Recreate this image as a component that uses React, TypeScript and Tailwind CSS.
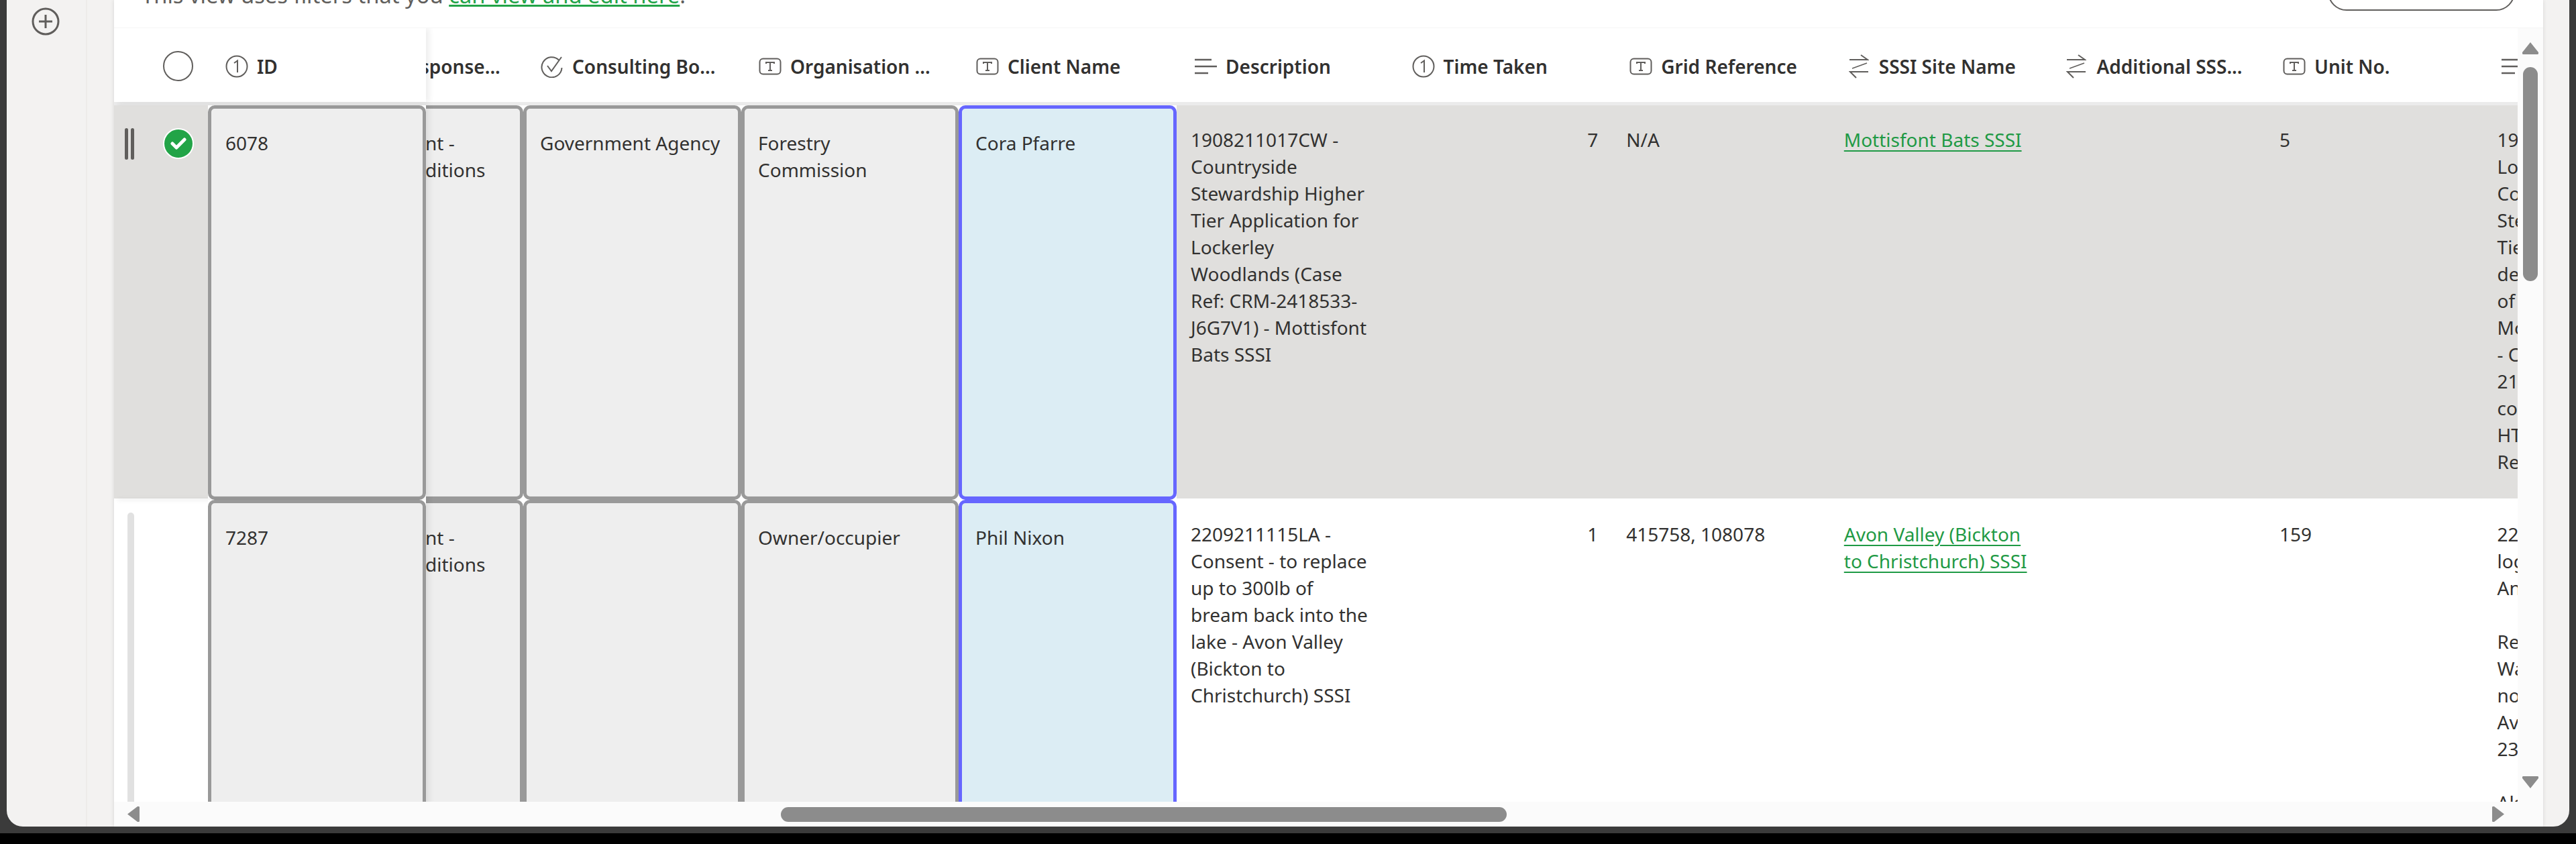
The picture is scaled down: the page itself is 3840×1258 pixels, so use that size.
const font = "font-['Noto_Sans','Open_Sans',sans-serif]";

type IconKind = 'number' | 'text' | 'check' | 'lines' | 'link';

function ColumnIcon({ kind }: { kind: IconKind }) {
  if (kind === 'number') {
    return (
      <svg width="34" height="34" viewBox="0 0 34 34" fill="none" stroke="#605e5c" strokeWidth="2">
        <circle cx="17" cy="17" r="15.5" />
        <path d="M13 12l5-3.5V26" />
      </svg>
    );
  }
  if (kind === 'text') {
    return (
      <svg width="34" height="26" viewBox="0 0 34 26" fill="none" stroke="#605e5c" strokeWidth="2">
        <rect x="1.5" y="1.5" width="31" height="23" rx="5" />
        <path d="M11 9V7h12v2M17 7v12M14 19h6" />
      </svg>
    );
  }
  if (kind === 'check') {
    return (
      <svg width="34" height="34" viewBox="0 0 34 34" fill="none" stroke="#605e5c" strokeWidth="2">
        <path d="M27 7.5A15 15 0 1 0 31.5 19" />
        <path d="M10 16l6 8L31 3" />
      </svg>
    );
  }
  if (kind === 'lines') {
    return (
      <svg width="34" height="24" viewBox="0 0 34 24" fill="none" stroke="#605e5c" strokeWidth="2.5">
        <path d="M1 2h25M1 12h33M1 22h20" />
      </svg>
    );
  }
  return (
    <svg width="30" height="36" viewBox="0 0 30 36" fill="none" stroke="#605e5c" strokeWidth="2">
      <path d="M1 8h27L18 1M29 26H2l9 9" />
      <path d="M27 13L5 21" strokeWidth="1.5" />
    </svg>
  );
}

function HeaderCell({ kind, label, className }: { kind: IconKind; label: string; className: string }) {
  return (
    <div className={`flex items-center gap-[13px] pl-[26px] text-[28px] font-semibold text-[#323130] ${className}`}>
      <span className="flex w-[34px] shrink-0 items-center justify-center">
        <ColumnIcon kind={kind} />
      </span>
      <span className="whitespace-nowrap">{label}</span>
    </div>
  );
}

function FrameCell({ children, active, className }: { children?: React.ReactNode; active?: boolean; className: string }) {
  return (
    <div className={`h-full shrink-0 bg-white ${className}`}>
      <div
        className={`h-full rounded-[10px] border-[5px] pl-[21px] pt-[31px] ${
          active ? 'border-[#6666ff] bg-[#dcedf4]' : 'border-[#999999] bg-[#eeeeee]'
        }`}
      >
        {children}
      </div>
    </div>
  );
}

function ClippedCell({ lines }: { lines: string[] }) {
  return (
    <div className="h-full w-[145px] shrink-0 overflow-hidden bg-white">
      <div className="h-full rounded-r-[10px] border-y-[5px] border-r-[5px] border-[#999999] bg-[#eeeeee] pt-[31px]">
        {lines.map((l) => (
          <div key={l} className="flex h-[40px] justify-start whitespace-pre ml-[-1px]">
            {l}
          </div>
        ))}
      </div>
    </div>
  );
}

function Lines({ lines, className = '' }: { lines: string[]; className?: string }) {
  return (
    <div className={`h-full w-[324.6px] shrink-0 overflow-hidden pt-[31px] ${className}`}>
      {lines.map((l, i) => (
        <div key={i} className="h-[40px] whitespace-nowrap">
          {l}
        </div>
      ))}
    </div>
  );
}

function LinkCell({ lines }: { lines: string[] }) {
  return (
    <div className="h-full w-[324.6px] shrink-0 pl-[21px] pt-[31px] text-[#1f9a45]">
      {lines.map((l) => (
        <div key={l} className="h-[40px] whitespace-nowrap underline decoration-2 underline-offset-[5px]">
          {l}
        </div>
      ))}
    </div>
  );
}

const rows = [
  {
    id: '6078',
    selected: true,
    consulting: 'Government Agency',
    organisation: ['Forestry', 'Commission'],
    client: 'Cora Pfarre',
    description: [
      '1908211017CW -',
      'Countryside',
      'Stewardship Higher',
      'Tier Application for',
      'Lockerley',
      'Woodlands (Case',
      'Ref: CRM-2418533-',
      'J6G7V1) - Mottisfont',
      'Bats SSSI',
    ],
    time: '7',
    grid: 'N/A',
    site: ['Mottisfont Bats SSSI'],
    unit: '5',
    notes: ['1908211017CW', 'Lockerley', 'Countryside', 'Stewardship', 'Tier', 'details', 'of', 'Mottisfont', '- CRM', '21', 'consultation', 'HTML', 'Response'],
  },
  {
    id: '7287',
    selected: false,
    consulting: '',
    organisation: ['Owner/occupier'],
    client: 'Phil Nixon',
    description: [
      '2209211115LA -',
      'Consent - to replace',
      'up to 300lb of',
      'bream back into the',
      'lake - Avon Valley',
      '(Bickton to',
      'Christchurch) SSSI',
    ],
    time: '1',
    grid: '415758, 108078',
    site: ['Avon Valley (Bickton', 'to Christchurch) SSSI'],
    unit: '159',
    notes: ['2209211115LA', 'logged', 'Angler', '', 'Request', 'Water', 'not', 'Avon', '23', '', 'Also'],
  },
];

function Row({ row, height }: { row: (typeof rows)[number]; height: string }) {
  return (
    <div className={`flex shrink-0 text-[#323130] ${height} ${row.selected ? 'bg-[linear-gradient(#e0dfdd_calc(100%-2px),#ffffff_2px)]' : 'bg-white'}`}>
      <div className="relative z-10 flex shrink-0 shadow-[5px_0_8px_rgba(0,0,0,0.07)]">
        <div className="flex h-full w-[140px] shrink-0 pt-[34px]">
          {row.selected ? (
            <div className="ml-[16px] flex h-[47px] gap-[4px]">
              <div className="h-full w-[5px] rounded-full bg-[#605e5c]" />
              <div className="h-full w-[5px] rounded-full bg-[#605e5c]" />
            </div>
          ) : (
            <div className="ml-[20px] mt-[-15px] h-[600px] w-[10px] rounded-full bg-[#e1e1e1]" />
          )}
          {row.selected && (
            <div className="ml-[43px] flex h-[46px] w-[46px] items-center justify-center rounded-full border-2 border-white bg-[#22a447]">
              <svg width="24" height="20" viewBox="0 0 24 20" fill="none" stroke="#fff" strokeWidth="5" strokeLinecap="round" strokeLinejoin="round">
                <path d="M3 10l6 6L21 4" />
              </svg>
            </div>
          )}
        </div>
        <FrameCell className="w-[325px]">{row.id}</FrameCell>
      </div>
      <ClippedCell lines={['nt -', 'ditions']} />
      <FrameCell className="w-[325px]">
        <div className="ml-[-1px]">{row.consulting}</div>
      </FrameCell>
      <FrameCell className="w-[324px]">
        {row.organisation.map((l) => (
          <div key={l} className="ml-[-1px]">
            {l}
          </div>
        ))}
      </FrameCell>
      <FrameCell active className="w-[325px]">
        <div className="ml-[-1px]">{row.client}</div>
      </FrameCell>
      <Lines lines={row.description} className="pl-[21px]" />
      <div className="h-full w-[324.6px] shrink-0 pt-[31px] pr-[21px] text-right">{row.time}</div>
      <Lines lines={[row.grid]} className="pl-[21px]" />
      <LinkCell lines={row.site} />
      <div className="h-full w-[324.6px] shrink-0" />
      <Lines lines={[row.unit]} className="pl-[21px]" />
      <Lines lines={row.notes} className="pl-[21px]" />
    </div>
  );
}

export default function App() {
  return (
    <div className={`h-[1258px] w-[3840px] overflow-hidden bg-black text-[28px] leading-[40px] ${font}`}>
      <div className="h-[1242px] bg-[#3b3b3b] pb-[10px] pl-[10px] pr-[10px]">
        <div className="flex h-full overflow-hidden rounded-b-[24px] bg-[#f3f2f1]">
          {/* left rail */}
          <div className="h-full w-[120px] shrink-0 border-r-2 border-[#edebe9] pl-[37px] pt-[11px]">
            <svg width="42" height="42" viewBox="0 0 42 42" fill="none" stroke="#605e5c">
              <circle cx="21" cy="21" r="19" strokeWidth="3" />
              <path d="M21 11v20M11 21h20" strokeWidth="3" />
            </svg>
          </div>
          <div className="w-[40px] shrink-0" />

          {/* main panel */}
          <div className="flex h-full w-[3621px] shrink-0 flex-col bg-white shadow-[0_0_6px_rgba(0,0,0,0.12)]">
            <div className="flex h-[42px] shrink-0 justify-between overflow-hidden border-b border-[#f5f5f5] pl-[41px] pr-[42px]">
              <div className="mt-[-27px] whitespace-nowrap text-[32.7px] text-[#605e5c]">
                This view uses filters that you{' '}
                <span className="text-[#22a447] underline decoration-[3px] underline-offset-[2px]">can view and edit here</span>.
              </div>
              <div className="mt-[-40px] flex h-[56px] w-[279px] shrink-0 items-end justify-center rounded-full border-2 border-[#605e5c] pb-[6px] text-[32px] font-semibold text-[#323130]">
                Clear filters
              </div>
            </div>

            <div className="flex min-h-0 flex-1">
              <div className="flex min-w-0 flex-1 flex-col overflow-hidden">
                {/* header */}
                <div className="flex h-[115px] shrink-0 border-b-[5px] border-[#ebebeb] bg-white pt-[3px]">
                  <div className="relative z-10 mt-[-3px] flex h-[110px] w-[465px] shrink-0 bg-white pt-[3px] shadow-[5px_0_8px_rgba(0,0,0,0.07)]">
                    <div className="flex h-full w-[140px] shrink-0 items-center pl-[73px]">
                      <div className="h-[45px] w-[45px] rounded-full border-2 border-[#605e5c]" />
                    </div>
                    <HeaderCell kind="number" label="ID" className="w-[325px]" />
                  </div>
                  <div className="flex h-full w-[145px] shrink-0 items-center overflow-hidden text-[28px] font-semibold text-[#323130]">
                    <span className="ml-[-9px] whitespace-nowrap">sponse...</span>
                  </div>
                  <HeaderCell kind="check" label="Consulting Bo..." className="w-[325px] shrink-0" />
                  <HeaderCell kind="text" label="Organisation ..." className="w-[324px] shrink-0" />
                  <HeaderCell kind="text" label="Client Name" className="w-[325px] shrink-0" />
                  <HeaderCell kind="lines" label="Description" className="w-[324.6px] shrink-0" />
                  <HeaderCell kind="number" label="Time Taken" className="w-[324.6px] shrink-0" />
                  <HeaderCell kind="text" label="Grid Reference" className="w-[324.6px] shrink-0" />
                  <HeaderCell kind="link" label="SSSI Site Name" className="w-[324.6px] shrink-0" />
                  <HeaderCell kind="link" label="Additional SSS..." className="w-[324.6px] shrink-0" />
                  <HeaderCell kind="text" label="Unit No." className="w-[324.6px] shrink-0" />
                  <HeaderCell kind="lines" label="Notes" className="w-[324.6px] shrink-0" />
                </div>
                <Row row={rows[0]} height="h-[588px]" />
                <Row row={rows[1]} height="h-[588px]" />
              </div>

              {/* vertical scrollbar */}
              <div className="flex h-full w-[38px] shrink-0 flex-col items-center bg-[#fbfbfb] pb-[20px] pt-[21px]">
                <svg width="24" height="18" viewBox="0 0 24 18" fill="#8c8c8c">
                  <path d="M12 0L24 15a2 2 0 0 1-2 3H2a2 2 0 0 1-2-3z" />
                </svg>
                <div className="mt-[19px] h-[319px] w-[22px] rounded-full bg-[#8c8c8c]" />
                <svg className="mt-auto" width="24" height="18" viewBox="0 0 24 18" fill="#8c8c8c">
                  <path d="M12 18L0 3a2 2 0 0 1 2-3h20a2 2 0 0 1 2 3z" />
                </svg>
              </div>
            </div>

            {/* horizontal scrollbar */}
            <div className="flex h-[37px] shrink-0 items-center bg-[#fbfbfb] pl-[20px] pr-[58px]">
              <svg width="18" height="23" viewBox="0 0 18 23" fill="#8c8c8c">
                <path d="M0 11.5L15 0a2 2 0 0 1 3 2v19a2 2 0 0 1-3 2z" />
              </svg>
              <div className="ml-[956px] h-[22px] w-[1082px] rounded-full bg-[#8c8c8c]" />
              <svg className="ml-auto" width="18" height="23" viewBox="0 0 18 23" fill="#8c8c8c">
                <path d="M18 11.5L3 23a2 2 0 0 1-3-2V2a2 2 0 0 1 3-2z" />
              </svg>
            </div>
          </div>
        </div>
      </div>
    </div>
  );
}
